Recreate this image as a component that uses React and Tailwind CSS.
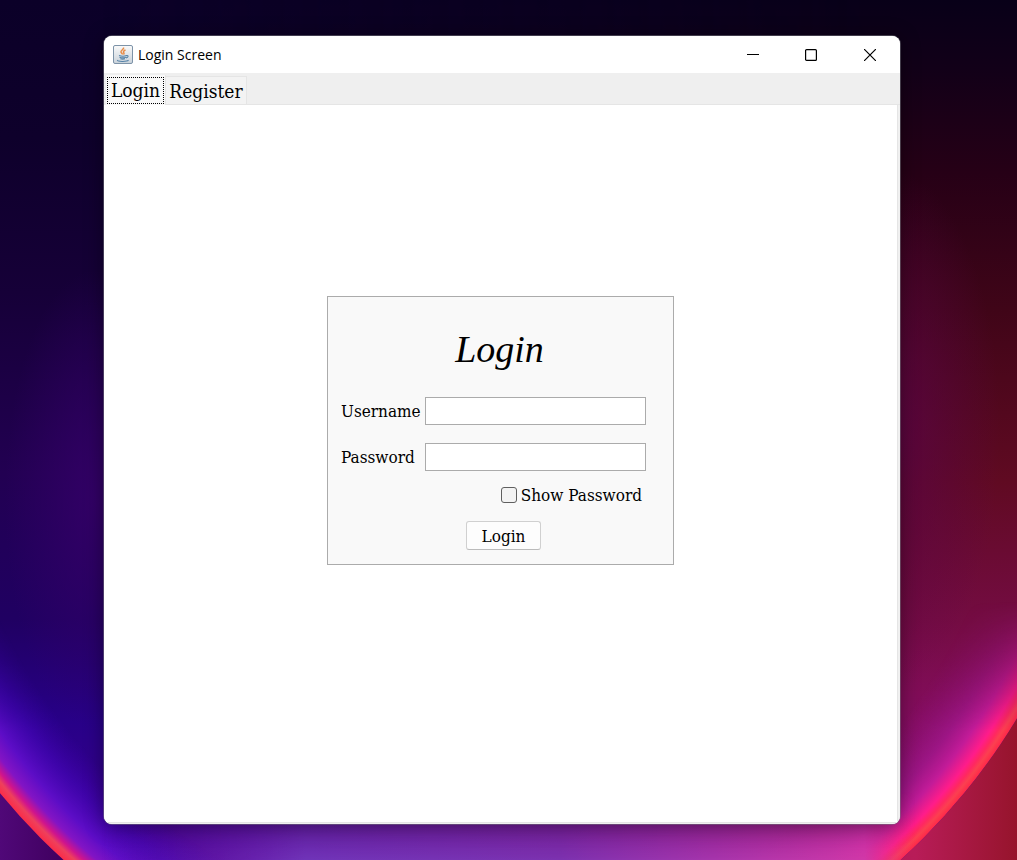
import React, { useState } from "react";

function Wallpaper() {
  return (
    <svg
      className="absolute inset-0 h-full w-full"
      viewBox="0 0 1017 860"
      preserveAspectRatio="none"
      aria-hidden="true"
    >
      <defs>
        <linearGradient id="coolSky" x1="0" y1="0" x2="0" y2="1">
          <stop offset="0" stopColor="#0b0028" />
          <stop offset="0.16" stopColor="#0e002b" />
          <stop offset="0.34" stopColor="#160038" />
          <stop offset="0.55" stopColor="#220052" />
          <stop offset="0.72" stopColor="#200062" />
          <stop offset="0.84" stopColor="#280088" />
          <stop offset="1" stopColor="#400090" />
        </linearGradient>
        <linearGradient id="warmSky" x1="0" y1="0" x2="0" y2="1">
          <stop offset="0" stopColor="#080018" />
          <stop offset="0.08" stopColor="#120018" />
          <stop offset="0.2" stopColor="#260016" />
          <stop offset="0.36" stopColor="#400518" />
          <stop offset="0.56" stopColor="#600a22" />
          <stop offset="0.72" stopColor="#740c42" />
          <stop offset="0.84" stopColor="#850d60" />
          <stop offset="1" stopColor="#8c1070" />
        </linearGradient>
        <radialGradient id="violetHaze" gradientUnits="userSpaceOnUse" cx="0" cy="0" r="1" gradientTransform="translate(95 500) scale(90 230)">
          <stop offset="0" stopColor="#36006a" stopOpacity="0.8" />
          <stop offset="1" stopColor="#36006a" stopOpacity="0" />
        </radialGradient>
        <radialGradient id="plumHaze" gradientUnits="userSpaceOnUse" cx="0" cy="0" r="1" gradientTransform="translate(890 430) scale(110 260)">
          <stop offset="0" stopColor="#5a0448" stopOpacity="0.8" />
          <stop offset="1" stopColor="#5a0448" stopOpacity="0" />
        </radialGradient>
        <linearGradient id="sweep" x1="0" y1="0" x2="1" y2="0">
          <stop offset="0.1" stopColor="#000" />
          <stop offset="0.88" stopColor="#fff" />
        </linearGradient>
        <mask id="warmSide">
          <rect width="1017" height="860" fill="url(#sweep)" />
        </mask>
        <radialGradient id="coolRing" gradientUnits="userSpaceOnUse" cx="482" cy="397" r="624">
          <stop offset="0.85" stopColor="#3a00a8" stopOpacity="0" />
          <stop offset="0.9" stopColor="#4405b6" stopOpacity="0.7" />
          <stop offset="0.94" stopColor="#5d0dc6" />
          <stop offset="0.965" stopColor="#8314c4" />
          <stop offset="0.979" stopColor="#d0148c" />
          <stop offset="0.988" stopColor="#ee405c" />
          <stop offset="1" stopColor="#fb2c48" />
        </radialGradient>
        <radialGradient id="warmRing" gradientUnits="userSpaceOnUse" cx="482" cy="397" r="624">
          <stop offset="0.85" stopColor="#8a1078" stopOpacity="0" />
          <stop offset="0.92" stopColor="#a0178a" stopOpacity="0.85" />
          <stop offset="0.95" stopColor="#c21b98" />
          <stop offset="0.974" stopColor="#ff1c8a" />
          <stop offset="0.984" stopColor="#ff2860" />
          <stop offset="0.991" stopColor="#fb4050" />
          <stop offset="1" stopColor="#ff2848" />
        </radialGradient>
        <linearGradient id="fade" x1="0" y1="0" x2="0" y2="1">
          <stop offset="0.7" stopColor="#000" />
          <stop offset="0.85" stopColor="#fff" />
        </linearGradient>
        <mask id="lower">
          <rect width="1017" height="860" fill="url(#fade)" />
        </mask>
        <linearGradient id="outside" x1="0" y1="0" x2="1" y2="0">
          <stop offset="0" stopColor="#500878" />
          <stop offset="0.06" stopColor="#400060" />
          <stop offset="0.9" stopColor="#b81c58" />
          <stop offset="1" stopColor="#96142c" />
        </linearGradient>
        <linearGradient id="floor" x1="0" y1="0" x2="1" y2="0">
          <stop offset="0.1" stopColor="#7018c0" stopOpacity="0" />
          <stop offset="0.3" stopColor="#7034b8" />
          <stop offset="0.55" stopColor="#7c32b0" />
          <stop offset="0.85" stopColor="#d038a8" />
          <stop offset="0.9" stopColor="#e83080" stopOpacity="0" />
        </linearGradient>
        <linearGradient id="floorFade" x1="0" y1="0" x2="0" y2="1">
          <stop offset="0.92" stopColor="#000" />
          <stop offset="1" stopColor="#fff" />
        </linearGradient>
        <mask id="floorMask">
          <rect width="1017" height="860" fill="url(#floorFade)" />
        </mask>
        <clipPath id="disc">
          <rect width="1017" height="500" />
          <circle cx="482" cy="397" r="624" />
        </clipPath>
      </defs>
      <rect width="1017" height="860" fill="url(#outside)" />
      <g clipPath="url(#disc)">
        <rect width="1017" height="860" fill="url(#coolSky)" />
        <rect width="1017" height="860" fill="url(#warmSky)" mask="url(#warmSide)" />
        <rect width="1017" height="860" fill="url(#violetHaze)" />
        <rect width="1017" height="860" fill="url(#plumHaze)" />
        <g mask="url(#lower)">
          <rect width="508" height="860" fill="url(#coolRing)" />
          <rect x="508" width="509" height="860" fill="url(#warmRing)" />
        </g>
        <rect width="1017" height="860" fill="url(#floor)" mask="url(#floorMask)" />
      </g>
    </svg>
  );
}

function JavaIcon() {
  return (
    <svg className="h-5 w-5 shrink-0" viewBox="0 0 20 20" fill="none" aria-hidden="true">
      <defs>
        <linearGradient id="tile" x1="0" y1="0" x2="0" y2="1">
          <stop offset="0" stopColor="#fafafa" />
          <stop offset="1" stopColor="#c9d2da" />
        </linearGradient>
      </defs>
      <rect x="0.5" y="0.5" width="19" height="18" rx="1.5" fill="url(#tile)" stroke="#7d93a8" />
      <path d="M10.500 2.500c1 1.800-3.200 2.600-2.500 4.600.3 1 1.500 1.400 1.500 2.400M12.500 5c-2 .8-2.500 1.700-1.700 2.700.5.700.2 1.300-.3 1.800" stroke="#e88b45" strokeWidth="1.500" />
      <path d="M6 10.500c2.200.8 5.600.8 7.500 0M6.500 12.200c2 .8 4.700.8 6.300 0M7.300 13.800c1.500.5 3.200.5 4.700 0M13.500 10.600c2.300-.6 2 1.900-.5 2.300M4.500 15c-1 1.800 9.500 2 11 .2" stroke="#5683a8" strokeWidth="1.100" />
    </svg>
  );
}

const serif = "font-['DejaVu_Serif_Condensed','DejaVu_Serif',serif]";

function Field({ id, label, type }) {
  return (
    <div className="flex items-center">
      <label htmlFor={id} className="w-21 shrink-0">{label}</label>
      <input
        id={id}
        type={type}
        className="h-7 min-w-0 flex-1 border border-[#ababab] bg-white px-1 outline-none"
      />
    </div>
  );
}

export default function App() {
  const [tab, setTab] = useState("login");
  const [shown, setShown] = useState(false);
  return (
    <main className="relative flex min-h-screen bg-[#0b0028] py-9 pr-[117px] pl-26">
      <Wallpaper />
      <section className="relative flex flex-1 flex-col overflow-hidden rounded-lg bg-white shadow-[0_0_0_1px_rgba(120,120,130,0.5),0_2px_20px_rgba(0,0,0,0.4)]">
        <header className="flex h-[37px] shrink-0 items-center bg-white pl-[9px]">
          <JavaIcon />
          <h1 className="ml-[5px] flex-1 font-['Open_Sans','Noto_Sans',sans-serif] text-sm text-black">Login Screen</h1>
          <button aria-label="Minimize" className="flex h-full w-[58px] items-center justify-center">
            <svg className="h-3 w-3" viewBox="0 0 12 12"><path d="M0 5.500h12" stroke="#000" /></svg>
          </button>
          <button aria-label="Maximize" className="flex h-full w-[58px] items-center justify-center">
            <svg className="h-3 w-3" viewBox="0 0 12 12"><rect x="0.600" y="0.600" width="10.800" height="10.800" rx="1" fill="none" stroke="#000" strokeWidth="1.200" /></svg>
          </button>
          <button aria-label="Close" className="flex h-full w-[60px] items-center justify-center">
            <svg className="h-3 w-3" viewBox="0 0 12 12"><path d="M0 0l12 12M12 0L0 12" stroke="#000" strokeWidth="1.200" /></svg>
          </button>
        </header>
        <nav role="tablist" className={`flex h-8 shrink-0 items-end bg-[#efefef] pl-[2px] text-[19px] leading-6 text-black ${serif}`}>
          <button
            role="tab"
            aria-selected={tab === "login"}
            onClick={() => setTab("login")}
            className="flex h-[30px] w-[60px] items-center border-r border-[#e5e5e5] bg-[#f9f9f9] p-px"
          >
            <span className="flex h-[27px] w-full items-center justify-center border border-dotted border-black">Login</span>
          </button>
          <button
            role="tab"
            aria-selected={tab === "register"}
            onClick={() => setTab("register")}
            className="flex h-[29px] w-[81px] items-center justify-center border-t border-r border-b border-[#e5e5e5] bg-[#f3f3f3]"
          >
            Register
          </button>
          <span className="flex-1 self-end border-b border-[#e5e5e5]" />
        </nav>
        <div className="flex flex-1 flex-col bg-[#f0f0f0] pr-[2px] pb-px">
          <div className="flex flex-1 items-center justify-center border-r border-b border-[#e5e5e5] bg-white pb-[66px]">
            <form
              onSubmit={(e) => e.preventDefault()}
              className={`flex w-[347px] flex-col border border-[#ababab] bg-[#f9f9f9] pt-6 pr-[27px] pb-[14px] pl-[13px] text-[17px] leading-6 text-black ${serif}`}
            >
              <h2 className="mb-5 pl-3 text-center font-['Liberation_Serif',serif] text-[38px] leading-14 italic">Login</h2>
              <div className="flex flex-col gap-[18px]">
                <Field id="username" label="Username" type="text" />
                <Field id="password" label="Password" type={shown ? "text" : "password"} />
              </div>
              <label className="mt-3 flex items-center justify-end gap-1 pr-1">
                <input
                  type="checkbox"
                  checked={shown}
                  onChange={(e) => setShown(e.target.checked)}
                  className="h-4 w-4 appearance-none rounded-[3px] border border-[#5f5f5f] bg-[#f3f3f3] checked:bg-[#0067c0]"
                />
                Show Password
              </label>
              <button
                type="submit"
                className="mt-[14px] ml-[20px] h-[29px] w-[75px] self-center rounded-[3px] border border-[#d0d0d0] border-b-[#bbbbbb] bg-[#fdfdfd]"
              >
                Login
              </button>
            </form>
          </div>
        </div>
      </section>
    </main>
  );
}
